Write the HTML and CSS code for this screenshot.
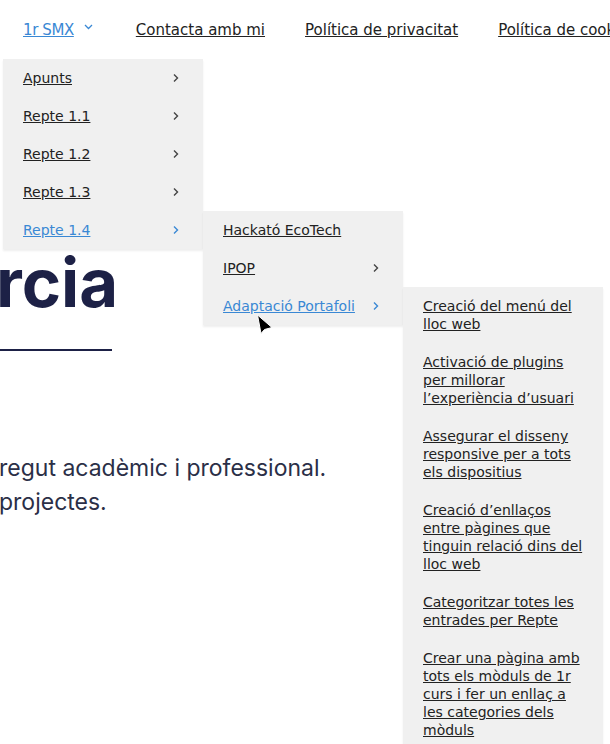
FILE: index.html
```html
<!DOCTYPE html>
<html lang="ca">
<head>
    <meta charset="UTF-8">
    <meta name="viewport" content="width=device-width, initial-scale=1.0">
    <link rel="stylesheet" href="styles.css">
    <title>Portafoli</title>
</head>
<body>
    <header class="site-header">
        <nav class="main-nav">
            <ul class="menu">
                <li class="menu-item has-children">
                    <a href="#" class="current">1r SMX</a>
                    <svg class="caret-down" width="9" height="6" viewBox="0 0 9 6"><path d="M1 1 L4.5 4.5 L8 1"/></svg>

                    <ul class="sub-menu">
                        <li><a href="#">Apunts</a><svg class="caret" width="10" height="10" viewBox="0 0 10 10"><path d="M1 1.5 L4.5 5 L1 8.5"/></svg></li>
                        <li><a href="#">Repte 1.1</a><svg class="caret" width="10" height="10" viewBox="0 0 10 10"><path d="M1 1.5 L4.5 5 L1 8.5"/></svg></li>
                        <li><a href="#">Repte 1.2</a><svg class="caret" width="10" height="10" viewBox="0 0 10 10"><path d="M1 1.5 L4.5 5 L1 8.5"/></svg></li>
                        <li><a href="#">Repte 1.3</a><svg class="caret" width="10" height="10" viewBox="0 0 10 10"><path d="M1 1.5 L4.5 5 L1 8.5"/></svg></li>
                        <li class="open">
                            <a href="#" class="current">Repte 1.4</a><svg class="caret" width="10" height="10" viewBox="0 0 10 10"><path d="M1 1.5 L4.5 5 L1 8.5"/></svg>

                            <ul class="sub-menu">
                                <li><a href="#">Hackató EcoTech</a></li>
                                <li><a href="#">IPOP</a><svg class="caret" width="10" height="10" viewBox="0 0 10 10"><path d="M1 1.5 L4.5 5 L1 8.5"/></svg></li>
                                <li class="open">
                                    <a href="#" class="current">Adaptació Portafoli</a><svg class="caret" width="10" height="10" viewBox="0 0 10 10"><path d="M1 1.5 L4.5 5 L1 8.5"/></svg>

                                    <ul class="sub-menu tasks">
                                        <li><a href="#">Creació del menú del lloc web</a></li>
                                        <li><a href="#">Activació de plugins per millorar l’experiència d’usuari</a></li>
                                        <li><a href="#">Assegurar el disseny responsive per a tots els dispositius</a></li>
                                        <li><a href="#">Creació d’enllaços entre pàgines que tinguin relació dins del lloc web</a></li>
                                        <li><a href="#">Categoritzar totes les entrades per Repte</a></li>
                                        <li><a href="#">Crear una pàgina amb tots els mòduls de 1r curs i fer un enllaç a les categories dels mòduls</a></li>
                                    </ul>
                                </li>
                            </ul>
                        </li>
                    </ul>
                </li>
                <li class="menu-item"><a href="#">Contacta amb mi</a></li>
                <li class="menu-item"><a href="#">Política de privacitat</a></li>
                <li class="menu-item"><a href="#">Política de cookies</a></li>
            </ul>
        </nav>
    </header>

    <main class="hero">
        <h1 class="hero-title">rcia</h1>
        <div class="hero-line"></div>
        <p class="hero-text">regut acadèmic i professional.<br>projectes.</p>
    </main>

    <!-- punter del ratolí -->
    <svg class="mouse-cursor" width="18" height="22" viewBox="0 0 18 22"><path d="M1.5 1 L5 19.5 L8.5 15.5 L16 13.5 Z"/></svg>
</body>
</html>
```

FILE: styles.css
```css
html, body {
    margin: 0;
    overflow: hidden;
    background: #ffffff;
}

body {
    font-family: "DejaVu Sans", sans-serif;
    color: #222222;
    height: 744px;
    position: relative;
}

a {
    color: #222222;
    text-decoration: underline;
}

a.current {
    color: #3a88d4;
}

/* Barra de navegació */
.site-header {
    height: 59px;
    position: relative;
    z-index: 10;
}

.menu {
    list-style: none;
    margin: 0;
    padding: 0 0 0 23px;
    height: 59px;
    display: flex;
    align-items: stretch;
    gap: 40px;
    white-space: nowrap;
    font-size: 15px;
}

.menu-item {
    position: relative;
    display: flex;
    align-items: center;
}

.menu-item.has-children {
    gap: 10px;
    padding-right: 3px;
}

.menu-item.has-children > a {
    letter-spacing: -0.4px;
}

.caret-down {
    margin-top: -5px;
}

.caret-down path {
    fill: none;
    stroke: #3a88d4;
    stroke-width: 1.3;
}

/* Submenús */
.sub-menu {
    list-style: none;
    margin: 0;
    padding: 0;
    position: absolute;
    top: 100%;
    left: -20px;
    width: 200px;
    background: #f0f0f0;
    box-shadow: 0 2px 2px rgba(0, 0, 0, 0.07);
    font-size: 14px;
    line-height: 18px;
    white-space: normal;
}

.sub-menu li {
    position: relative;
    display: flex;
    align-items: center;
    justify-content: space-between;
    padding: 10px 20px;
}

.sub-menu .sub-menu {
    top: 0;
    left: 100%;
}

.caret path {
    fill: none;
    stroke: #444444;
    stroke-width: 1.4;
}

.open > .caret path {
    stroke: #3a88d4;
}

.sub-menu.tasks li {
    display: block;
    padding: 10px 16px 10px 20px;
}

/* Capçalera de la pàgina */
.hero {
    padding-top: 184px;
}

.hero-title {
    font-family: Inter, sans-serif;
    font-weight: 700;
    font-size: 67px;
    line-height: 80px;
    color: #1d2146;
    margin: 0 0 0 -4px;
}

.hero-line {
    width: 112px;
    height: 2px;
    background: #1d2146;
    margin-top: 26px;
}

.hero-text {
    font-family: Inter, sans-serif;
    font-size: 23px;
    line-height: 34px;
    color: #2b2f47;
    margin: 100px 0 0 -1px;
}

.mouse-cursor {
    position: absolute;
    left: 256px;
    top: 314px;
    z-index: 20;
}

.mouse-cursor path {
    fill: #000000;
    stroke: #ffffff;
    stroke-width: 1;
    stroke-linejoin: round;
}
```
